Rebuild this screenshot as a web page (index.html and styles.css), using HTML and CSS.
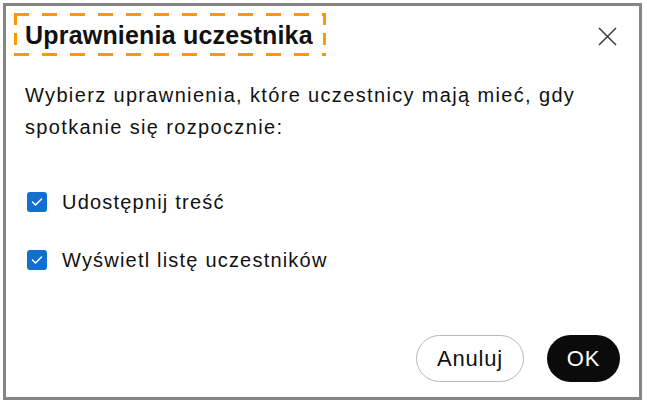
FILE: index.html
```html
<!DOCTYPE html>
<html lang="pl">
<head>
  <meta charset="UTF-8" />
  <title>Uprawnienia uczestnika</title>
  <link rel="stylesheet" href="styles.css">
</head>
<body>
  <div class="dialog">
    <header class="dialog-head">
      <h1 class="dialog-title">Uprawnienia uczestnika</h1>
      <button class="close-btn" aria-label="Zamknij">
        <svg width="19" height="19" viewBox="0 0 19 19">
          <path d="M1 1 L18 18 M18 1 L1 18" stroke="#3a3a3a" stroke-width="1.5" fill="none" />
        </svg>
      </button>
    </header>

    <p class="intro">Wybierz uprawnienia, które uczestnicy mają mieć, gdy spotkanie się rozpocznie:</p>

    <ul class="options">
      <li class="option">
        <span class="check">
          <svg width="12" height="10" viewBox="0 0 12 10">
            <path d="M1.5 5 L4.5 8 L10.5 2" stroke="white" stroke-width="1.5" fill="none" stroke-linecap="round" stroke-linejoin="round" />
          </svg>
        </span>
        Udostępnij treść
      </li>
      <li class="option">
        <span class="check">
          <svg width="12" height="10" viewBox="0 0 12 10">
            <path d="M1.5 5 L4.5 8 L10.5 2" stroke="white" stroke-width="1.5" fill="none" stroke-linecap="round" stroke-linejoin="round" />
          </svg>
        </span>
        Wyświetl listę uczestników
      </li>
    </ul>

    <footer class="dialog-foot">
      <button class="btn btn-cancel">Anuluj</button>
      <button class="btn btn-ok">OK</button>
    </footer>
  </div>
</body>
</html>
```

FILE: styles.css
```css
html, body {
  margin: 0;
  padding: 0;
  background: white;
  font-family: "Liberation Sans", Arial, sans-serif;
  color: #111;
}
body {
  padding: 3px 5px 5px 3px;
}

.dialog {
  box-sizing: border-box;
  width: 639px;
  height: 397px;
  border: 3px solid #858585;
  display: flex;
  flex-direction: column;
  padding: 7px 0 0 8px;
}

/* header with the dashed focus box round the title */
.dialog-head {
  display: flex;
  align-items: flex-start;
  justify-content: space-between;
}
.dialog-title {
  margin: 0;
  font-size: 25px;
  font-weight: bold;
  line-height: 28px;
  letter-spacing: 0.2px;
  padding: 8px 13px 7px 11px;
  background:
    repeating-linear-gradient(90deg, #ff9900 0 15px, transparent 15px 28px) top left / 100% 3px no-repeat,
    repeating-linear-gradient(90deg, #ff9900 0 15px, transparent 15px 28px) bottom left / 100% 3px no-repeat,
    repeating-linear-gradient(180deg, #ff9900 0 12px, transparent 12px 20px) top left / 3px 100% no-repeat,
    repeating-linear-gradient(180deg, #ff9900 0 12px, transparent 12px 20px) top right / 3px 100% no-repeat;
}
.close-btn {
  background: none;
  border: none;
  padding: 0;
  margin: 14px 22px 0 0;
  width: 19px;
  height: 19px;
  cursor: pointer;
}

.intro {
  margin: 23px 40px 0 11px;
  font-size: 20px;
  letter-spacing: 1.35px;
  line-height: 32px;
}

.options {
  list-style: none;
  margin: 47px 0 0 13px;
  padding: 0;
}
.option {
  display: flex;
  align-items: center;
  gap: 15px;
  font-size: 20px;
  letter-spacing: 1.2px;
  height: 24px;
  margin-bottom: 34px;
}
.check {
  width: 20px;
  height: 20px;
  border-radius: 3px;
  background: #1170cf;
  display: flex;
  align-items: center;
  justify-content: center;
}

.dialog-foot {
  margin-top: auto;
  display: flex;
  justify-content: flex-end;
  gap: 23px;
  padding: 0 19px 15px 0;
}
.btn {
  font-family: "Liberation Sans", Arial, sans-serif;
  font-size: 22px;
  letter-spacing: 0.8px;
  height: 47px;
  border-radius: 24px;
  cursor: pointer;
}
.btn-cancel {
  width: 108px;
  background: white;
  color: #111;
  border: 1px solid #b8b8b8;
}
.btn-ok {
  width: 73px;
  background: #0b0b0b;
  color: white;
  border: none;
}
```
